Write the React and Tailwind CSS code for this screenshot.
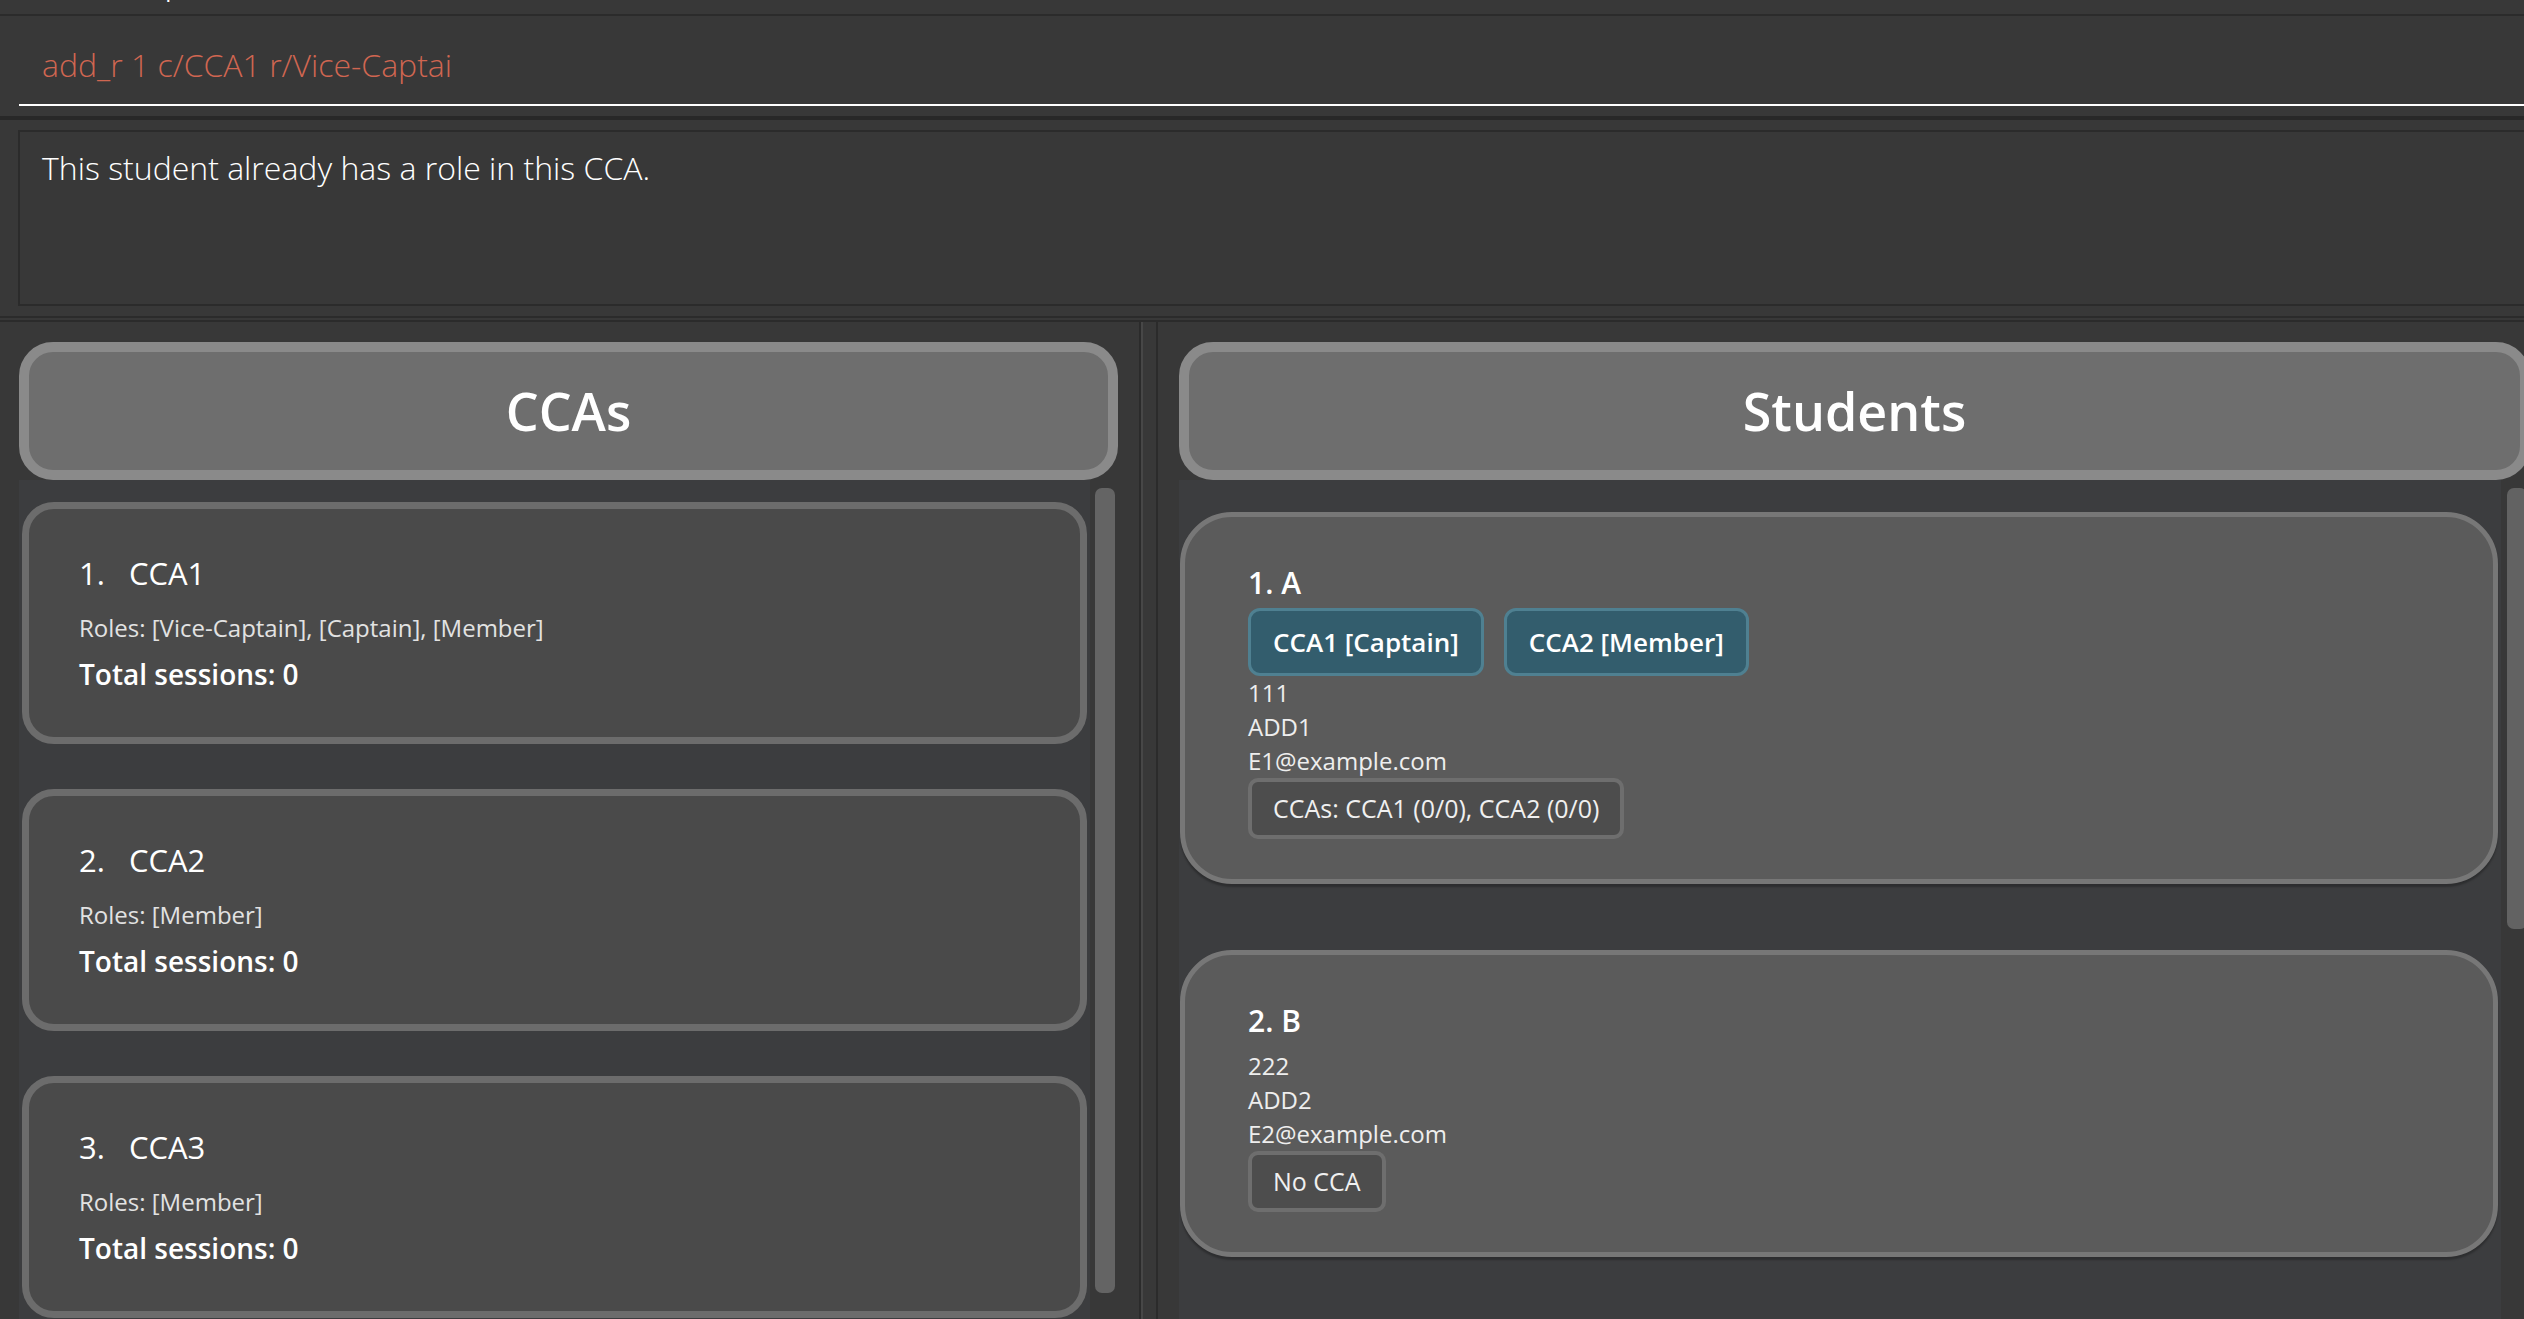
import React from 'react';

const ccas = [
  { id: 1, name: 'CCA1', roles: '[Vice-Captain], [Captain], [Member]', sessions: 0 },
  { id: 2, name: 'CCA2', roles: '[Member]', sessions: 0 },
  { id: 3, name: 'CCA3', roles: '[Member]', sessions: 0 },
];

const students = [
  {
    id: 1, name: 'A', phone: '111', address: 'ADD1', email: 'E1@example.com',
    tags: ['CCA1 [Captain]', 'CCA2 [Member]'],
    summary: 'CCAs: CCA1 (0/0), CCA2 (0/0)',
  },
  {
    id: 2, name: 'B', phone: '222', address: 'ADD2', email: 'E2@example.com',
    tags: [],
    summary: 'No CCA',
  },
];

function PaneHeader({ title }) {
  return (
    <div className="h-[138px] shrink-0 rounded-[34px] border-[10px] border-[#8a8a8a] bg-[#6e6e6e] flex items-center justify-center text-[52px] leading-[60px] font-semibold text-white">
      {title}
    </div>
  );
}

function CcaCard({ cca }) {
  return (
    <div className="h-[242px] shrink-0 rounded-[32px] border-[7px] border-[#6c6c6c] bg-[#4a4a4a] pl-[50px] pt-[43px]">
      <div className="flex gap-[24px] text-[31px] leading-[42px] text-white">
        <span>{cca.id}.</span>
        <span>{cca.name}</span>
      </div>
      <div className="mt-[17px] text-[24px] leading-[33px] text-[#e2e2e2]">Roles: {cca.roles}</div>
      <div className="mt-[11px] text-[28px] leading-[38px] font-semibold text-white">
        Total sessions: {cca.sessions}
      </div>
    </div>
  );
}

function StudentCard({ s }) {
  return (
    <div className="shrink-0 rounded-[52px] border-[5px] border-[#777777] bg-[#5b5b5b] pl-[63px] pt-[45px] pb-[40px] shadow-[0_3px_2px_rgba(0,0,0,0.25)]">
      <div className="text-[30px] leading-[41px] font-semibold text-white">
        {s.id}. {s.name}
      </div>
      {s.tags.length > 0 ? (
        <div className="mt-[5px] flex gap-[20px]">
          {s.tags.map((t) => (
            <div
              key={t}
              className="h-[68px] px-[22px] rounded-[12px] border-[3px] border-[#4f8091] bg-[#335d6d] flex items-center text-[26px] font-semibold text-white"
            >
              {t}
            </div>
          ))}
        </div>
      ) : (
        <div className="h-[8px]" />
      )}
      <div className="text-[24px] leading-[34px] text-[#eeeeee]">
        <div>{s.phone}</div>
        <div>{s.address}</div>
        <div>{s.email}</div>
      </div>
      <div className="w-fit h-[61px] px-[21px] rounded-[10px] border-[4px] border-[#6e6e6e] bg-[#4d4d4d] flex items-center text-[25px] text-[#f0f0f0]">
        {s.summary}
      </div>
    </div>
  );
}

export default function App() {
  return (
    <div className="w-[2524px] h-[1319px] overflow-hidden bg-[#383838] font-['Open_Sans','Noto_Sans',sans-serif]">
      <div className="w-[2551px] h-full flex flex-col">
        {/* menu bar, scrolled mostly out of view */}
        <div className="h-[14px] shrink-0 overflow-hidden">
          <div className="-mt-[25px] pl-[74px] flex gap-[16px] text-[24px] leading-[24px] text-white">
            <span>File</span>
            <span>Help</span>
          </div>
        </div>
        <div className="h-[2px] shrink-0 bg-[#2b2b2b]" />

        {/* command box */}
        <div className="h-[88px] shrink-0 pl-[42px] pt-[27px] text-[32px] leading-[44px] font-light text-[#d06651]">
          add_r 1 c/CCA1 r/Vice-Captai
        </div>
        <div className="ml-[19px] h-[2px] shrink-0 bg-white" />
        <div className="h-[10px] shrink-0" />
        <div className="h-[4px] shrink-0 bg-[#282828]" />
        <div className="h-[10px] shrink-0" />

        {/* result display */}
        <div className="ml-[18px] h-[176px] shrink-0 border-2 border-[#2b2b2b] pl-[22px] pt-[14px] text-[32px] leading-[44px] font-light text-white">
          This student already has a role in this CCA.
        </div>
        <div className="h-[10px] shrink-0" />
        <div className="h-[2px] shrink-0 bg-[#2b2b2b]" />
        <div className="h-[2px] shrink-0" />

        {/* split panes */}
        <div className="flex-1 min-h-0 flex border-t-2 border-[#2b2b2b]">
          <div className="w-[1139px] shrink-0 pl-[19px] pr-[21px] pt-[20px] flex flex-col">
            <PaneHeader title="CCAs" />
            <div className="flex-1 min-h-0 flex">
              <div className="flex-1 bg-[#3c3d3f] pt-[22px] px-[3px] flex flex-col gap-[45px] overflow-hidden">
                {ccas.map((c) => (
                  <CcaCard key={c.id} cca={c} />
                ))}
              </div>
              <div className="w-[28px] shrink-0 pl-[5px] pr-[3px] pt-[8px]">
                <div className="h-[805px] rounded-[7px] bg-[#646464]" />
              </div>
            </div>
          </div>

          <div className="w-[19px] shrink-0 flex">
            <div className="w-[2px] bg-[#2b2b2b]" />
            <div className="w-[2px] bg-[#474747]" />
            <div className="flex-1" />
            <div className="w-[2px] bg-[#2b2b2b]" />
          </div>

          <div className="flex-1 pl-[21px] pr-[21px] pt-[20px] flex flex-col">
            <PaneHeader title="Students" />
            <div className="flex-1 min-h-0 flex">
              <div className="flex-1 bg-[#3c3d3f] pt-[32px] pl-[1px] pr-[3px] flex flex-col gap-[66px] overflow-hidden">
                {students.map((s) => (
                  <StudentCard key={s.id} s={s} />
                ))}
              </div>
              <div className="w-[29px] shrink-0 pl-[6px] pr-[3px] pt-[8px]">
                <div className="h-[441px] rounded-[7px] bg-[#626262]" />
              </div>
            </div>
          </div>
        </div>
      </div>
    </div>
  );
}
